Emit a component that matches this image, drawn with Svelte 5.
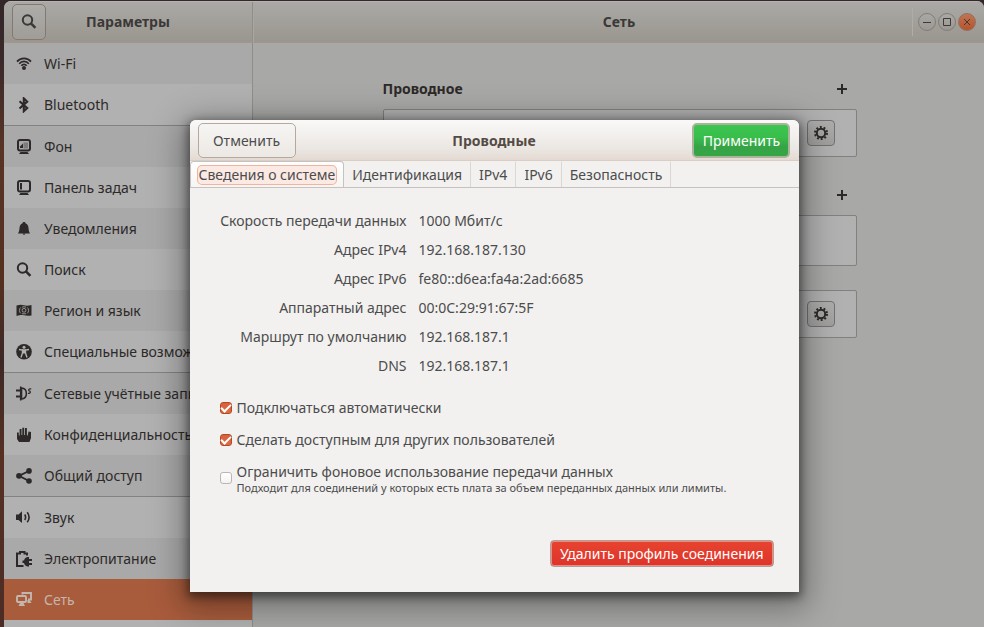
<script>
  const groups = [
    [
      { icon: 'wifi', label: 'Wi-Fi' },
      { icon: 'bluetooth', label: 'Bluetooth' }
    ],
    [
      { icon: 'background', label: 'Фон' },
      { icon: 'dock', label: 'Панель задач' },
      { icon: 'bell', label: 'Уведомления' },
      { icon: 'search', label: 'Поиск' },
      { icon: 'region', label: 'Регион и язык' },
      { icon: 'access', label: 'Специальные возможности' }
    ],
    [
      { icon: 'accounts', label: 'Сетевые учётные записи' },
      { icon: 'hand', label: 'Конфиденциальность' },
      { icon: 'share', label: 'Общий доступ' }
    ],
    [
      { icon: 'sound', label: 'Звук' },
      { icon: 'power', label: 'Электропитание' },
      { icon: 'network', label: 'Сеть', active: true }
    ]
  ];

  const tabs = ['Сведения о системе', 'Идентификация', 'IPv4', 'IPv6', 'Безопасность'];
  let current = $state(0);

  const details = [
    ['Скорость передачи данных', '1000 Мбит/с'],
    ['Адрес IPv4', '192.168.187.130'],
    ['Адрес IPv6', 'fe80::d6ea:fa4a:2ad:6685'],
    ['Аппаратный адрес', '00:0C:29:91:67:5F'],
    ['Маршрут по умолчанию', '192.168.187.1'],
    ['DNS', '192.168.187.1']
  ];

  let auto = $state(true);
  let shared = $state(true);
  let metered = $state(false);
</script>

{#snippet icon(name)}
  <svg class="icon" viewBox="0 0 16 16" aria-hidden="true">
    {#if name === 'wifi'}
      <g fill="none" stroke="currentColor" stroke-width="1.7">
        <path d="M1 5.6C4.6 1.2 11.400 1.200 15 5.600" />
        <path d="M3.200 7.700C5.700 4.700 10.300 4.700 12.800 7.700" />
        <path d="M5.300 9.700C6.800 8 9.200 8 10.700 9.700" />
      </g>
      <circle cx="8" cy="12" r="2" fill="currentColor" />
    {:else if name === 'bluetooth'}
      <path d="M3.500 4.200L11.200 11L7.800 14.200V1.300L11.200 4.600L3.500 11.500" fill="none" stroke="currentColor" stroke-width="2.100" />
    {:else if name === 'background'}
      <rect x="2" y="1" width="12" height="10.500" rx="2" fill="none" stroke="currentColor" stroke-width="2" />
      <path d="M4 9V7.500L7 4.500V9Z" fill="currentColor" />
      <path d="M7.500 3.500H12V9.500H7.500Z" fill="currentColor" opacity=".35" />
      <path d="M4.500 13H11.500L13 15H3Z" fill="currentColor" />
    {:else if name === 'dock'}
      <rect x="2" y="1" width="12" height="10.500" rx="2" fill="none" stroke="currentColor" stroke-width="2" />
      <path d="M4 3H6V9.500H4Z" fill="currentColor" />
      <path d="M4.500 13H11.500L13 15H3Z" fill="currentColor" />
    {:else if name === 'bell'}
      <path d="M8 1C9 1 9.500 1.600 9.500 2.300C12 3.200 12.500 5.500 12.600 8C12.700 10 13.300 11 14 12.500H2C2.700 11 3.300 10 3.400 8C3.500 5.500 4 3.200 6.500 2.300C6.500 1.600 7 1 8 1ZM6.500 12.700H9.500L8 14Z" fill="currentColor" />
    {:else if name === 'search'}
      <circle cx="6.500" cy="6" r="4.700" fill="none" stroke="currentColor" stroke-width="2" />
      <path d="M9.700 9.200L14.400 13.900" stroke="currentColor" stroke-width="2.500" />
    {:else if name === 'region'}
      <path d="M.5 2.500C4 1.500 6 1.700 8 2.300S12 3 15.500 2V12.500C12 13 10 12.800 8 12.300S4 12 .5 13Z" fill="currentColor" />
      <g fill="none" stroke="var(--row)" stroke-width=".8">
        <circle cx="8" cy="7.300" r="1.900" />
        <path d="M4.700 4.500C3 6 3 9 4.700 10.300M11.300 4.500C13 6 13 9 11.300 10.300M6 4.200C7.300 3.600 8.700 3.600 10 4.200M6 10.600C7.300 11 8.700 11 10 10.600" />
      </g>
    {:else if name === 'access'}
      <circle cx="8" cy="7.800" r="7.800" fill="currentColor" />
      <circle cx="8" cy="3.200" r="1.500" fill="var(--row)" />
      <path d="M3 5.500L6.500 6V9L5 13.500M13 5.500L9.500 6V9L11 13.500" fill="none" stroke="var(--row)" stroke-width="1.400" />
      <path d="M6 5.300H10V9.500H6Z" fill="var(--row)" />
    {:else if name === 'accounts'}
      <path d="M0 4.500H4M0 10.500H4" stroke="currentColor" stroke-width="2" />
      <path d="M4.700 .5V14.500" stroke="currentColor" stroke-width="1.600" />
      <path d="M5.500 2C12 2.500 12 12.500 5.500 13Z" fill="none" stroke="currentColor" stroke-width="1.600" />
      <path d="M15.300 3C12.500 2.300 12 4.500 13.500 5S14.500 7.800 12 7.300" fill="none" stroke="currentColor" stroke-width="1.200" />
    {:else if name === 'hand'}
      <path d="M1 5.500H2.800V8.500H3.600V2H5.500V8H6.300V.8H8.200V8H9V1H10.900V8.500H11.700L12.500 4.500L15 5V11L13.500 15H3L1 12Z" fill="currentColor" />
    {:else if name === 'share'}
      <path d="M13 3L3 7.800L13 13" fill="none" stroke="currentColor" stroke-width="1.900" />
      <g fill="currentColor"><circle cx="13" cy="2.900" r="2.800" /><circle cx="3" cy="7.800" r="2.900" /><circle cx="13" cy="13" r="2.800" /></g>
    {:else if name === 'sound'}
      <path d="M0 4.500H2.500L6 1.200V13L2.500 10H0Z" fill="currentColor" />
      <path d="M8.700 4.500Q10.500 7.200 8.700 10M11.200 2.200Q15 7.200 11.200 12.200" fill="none" stroke="currentColor" stroke-width="1.600" />
    {:else if name === 'power'}
      <path d="M11 4.500V2.500H8.500V0.900H4V2.500H1V15H7.500" fill="none" stroke="currentColor" stroke-width="2" />
      <path d="M6.500 9.500H8C8.500 7.500 10 6 12 6H13V8H16V10H13V12H16V14H13V15.500H12C10 15.500 8.500 14 8 12H6.500Z" fill="currentColor" />
    {:else if name === 'network'}
      <path d="M6.500 2.500V1H15V7.500H12" fill="none" stroke="currentColor" stroke-width="1.900" />
      <rect x="1" y="4" width="9" height="6" rx="1" fill="none" stroke="currentColor" stroke-width="1.900" />
      <path d="M4 11H7.500L9 14H2.500ZM11.500 8H13.500L15.500 11H11.500Z" fill="currentColor" />
    {:else if name === 'plus'}
      <path d="M8 3V13M3 8H13" stroke="currentColor" stroke-width="2" />
    {:else if name === 'gear'}
      <circle cx="8" cy="8" r="4.200" fill="none" stroke="currentColor" stroke-width="2" />
      <circle cx="8" cy="8" r="6" fill="none" stroke="currentColor" stroke-width="2" stroke-dasharray="1.900 1.870" />
    {/if}
  </svg>
{/snippet}

<div class="desktop">
  <div class="window">
    <header class="titlebar">
      <div class="title-side">
        <button class="search" aria-label="Поиск">{@render icon('search')}</button>
        <h1>Параметры</h1>
      </div>
      <div class="title-main">
        <h2>Сеть</h2>
        <div class="controls">
          <button aria-label="Свернуть"><svg viewBox="0 0 18 18"><path d="M5 9.500H13" /></svg></button>
          <button aria-label="Развернуть"><svg viewBox="0 0 18 18"><path d="M5.500 5.500H12.500V12.500H5.500Z" /></svg></button>
          <button class="close" aria-label="Закрыть"><svg viewBox="0 0 18 18"><path d="M6 6L12 12M12 6L6 12" /></svg></button>
        </div>
      </div>
    </header>

    <div class="body">
      <nav>
        {#each groups as group}
          <ul>
            {#each group as item}
              <li>
                <a href="#{item.icon}" class:active={item.active}>
                  {@render icon(item.icon)}
                  <span>{item.label}</span>
                </a>
              </li>
            {/each}
          </ul>
        {/each}
      </nav>

      <main>
        <div class="column">
          <section>
            <div class="section-head">
              <h3>Проводное</h3>
              <button class="add" aria-label="Добавить">{@render icon('plus')}</button>
            </div>
            <div class="card"><button class="gear" aria-label="Настроить">{@render icon('gear')}</button></div>
          </section>
          <section>
            <div class="section-head">
              <h3>VPN</h3>
              <button class="add" aria-label="Добавить VPN">{@render icon('plus')}</button>
            </div>
            <div class="card empty"></div>
          </section>
          <section class="proxy">
            <div class="card"><button class="gear" aria-label="Настроить прокси">{@render icon('gear')}</button></div>
          </section>
        </div>
      </main>
    </div>

    <div class="overlay">
      <div class="dialog" role="dialog" aria-labelledby="dialog-title">
        <div class="dialog-head">
          <button class="cancel">Отменить</button>
          <h2 id="dialog-title">Проводные</h2>
          <button class="apply">Применить</button>
        </div>
        <div class="tabs" role="tablist">
          {#each tabs as tab, i}
            <button role="tab" aria-selected={current === i} class:current={current === i} onclick={() => (current = i)}>
              <span>{tab}</span>
            </button>
          {/each}
        </div>
        <div class="panel">
          <dl>
            {#each details as [name, value]}
              <dt>{name}</dt>
              <dd>{value}</dd>
            {/each}
          </dl>
          <div class="checks">
            <label><input type="checkbox" bind:checked={auto} /><span>Подключаться автоматически</span></label>
            <label><input type="checkbox" bind:checked={shared} /><span>Сделать доступным для других пользователей</span></label>
            <label>
              <input type="checkbox" bind:checked={metered} />
              <span>
                Ограничить фоновое использование передачи данных
                <small>Подходит для соединений у которых есть плата за объем переданных данных или лимиты.</small>
              </span>
            </label>
          </div>
          <button class="delete">Удалить профиль соединения</button>
        </div>
      </div>
    </div>
  </div>
</div>

<style>
  :global(body) {
    margin: 0;
  }
  .desktop {
    box-sizing: border-box;
    height: 100vh;
    overflow: hidden;
    padding: 1px 0 0 4px;
    background: linear-gradient(#33272a 0, #3a292a 60px, #593425 150px, #55301f 280px, #3d2826 360px, #573022 460px, #4b2c26 100%);
    font: 14px/20px "Noto Sans", sans-serif;
    color: #2d2928;
  }
  .desktop * {
    box-sizing: border-box;
  }
  h1, h2, h3 {
    margin: 0;
    font: inherit;
    font-weight: 700;
  }
  button {
    font: inherit;
    color: inherit;
    margin: 0;
    padding: 0;
  }
  .icon {
    display: block;
    flex: none;
    width: 16px;
    height: 16px;
  }
  .window {
    position: relative;
    display: flex;
    flex-direction: column;
    height: 100%;
    overflow: hidden;
    border-radius: 7px 7px 0 0;
    background: #a8a8a6;
  }
  .titlebar {
    display: flex;
    flex: none;
    height: 42px;
    border-top: 1px solid #b5b4b2;
    border-bottom: 1px solid #a3948c;
    background: linear-gradient(#aaa9a6, #9a968f);
    color: #3b3838;
  }
  .title-side {
    display: flex;
    align-items: center;
    width: 249px;
    padding-left: 8px;
    border-right: 1px solid #918d88;
  }
  .title-side h1 {
    flex: 1;
    padding-right: 42px;
    text-align: center;
  }
  .search {
    display: grid;
    place-items: center;
    width: 34px;
    height: 36px;
    border: 1px solid #827a71;
    border-radius: 5px;
    background: linear-gradient(#adaca9, #a09d98);
  }
  .title-main {
    display: flex;
    flex: 1;
    align-items: center;
    padding-right: 8px;
    border-left: 1px solid #aaa7a3;
  }
  .title-main h2 {
    flex: 1;
    padding-left: 72px;
    text-align: center;
  }
  .controls {
    display: flex;
    gap: 2px;
    padding: 5px 0 5px 5px;
    border-left: 1px solid #b0ada9;
  }
  .controls button {
    width: 18px;
    height: 18px;
    border: 1px solid #837c76;
    border-radius: 50%;
    background: linear-gradient(#aaa8a5, #9b9893);
  }
  .controls svg {
    display: block;
    width: 18px;
    height: 18px;
    margin: -1px;
    fill: none;
    stroke: #3d3a38;
  }
  .controls .close {
    border-color: #93705f;
    background: linear-gradient(#c07454, #b6532c);
  }
  .body {
    display: flex;
    flex: 1;
    min-height: 0;
  }
  nav {
    width: 249px;
    flex: none;
    overflow: hidden;
    border-right: 1px solid #8f8e8c;
    background: #b1b1b1;
  }
  ul {
    margin: 0;
    padding: 0;
    list-style: none;
  }
  ul + ul {
    border-top: 1px solid #838281;
  }
  nav a {
    --row: #b1b1b1;
    display: flex;
    align-items: center;
    gap: 12px;
    height: 41px;
    padding: 0 12px;
    background: var(--row);
    color: inherit;
    text-decoration: none;
    white-space: nowrap;
  }
  ul:not(:last-child) li:nth-child(odd) a,
  ul:last-child li:nth-child(even) a {
    --row: #a9a9a9;
  }
  nav a.active {
    --row: #a95c3c;
    color: #c4b6ae;
  }
  main {
    flex: 1;
    display: flex;
    justify-content: center;
    padding: 34px 16px 0 18px;
  }
  .column {
    width: 100%;
    max-width: 474px;
  }
  .section-head {
    display: flex;
    align-items: center;
    justify-content: space-between;
    height: 24px;
    margin-bottom: 8px;
  }
  .add {
    display: grid;
    place-items: center;
    width: 30px;
    height: 24px;
    border: 0;
    background: none;
  }
  .card {
    display: flex;
    align-items: center;
    justify-content: flex-end;
    height: 48px;
    padding-right: 21px;
    border: 1px solid #82817f;
    border-radius: 2px;
    background: #b1b1b1;
  }
  .card.empty {
    height: 51px;
  }
  section {
    margin-bottom: 26px;
  }
  section + .proxy {
    margin-top: 24px;
  }
  section:nth-child(2) {
    margin-bottom: 0;
  }
  .gear {
    display: grid;
    place-items: center;
    width: 28px;
    height: 26px;
    border: 1px solid #737270;
    border-radius: 4px;
    background: linear-gradient(#adadac, #a09f9d);
  }
  .overlay {
    position: absolute;
    inset: 0;
    display: flex;
    align-items: flex-start;
    justify-content: center;
    padding-top: 119px;
  }
  .dialog {
    width: 609px;
    max-width: 100%;
    overflow: hidden;
    border-radius: 6px 6px 0 0;
    background: #f2f1f0;
    box-shadow: 0 3px 10px 2px rgba(0, 0, 0, .45), 0 8px 32px 8px rgba(0, 0, 0, .34);
    color: #4c4c4c;
  }
  .dialog-head {
    display: flex;
    align-items: center;
    justify-content: space-between;
    height: 41px;
    padding: 1px 8px 0;
    border-bottom: 1px solid #d9cec5;
    background: linear-gradient(#faf9f8, #ebe7e3 70%, #e5dad2);
  }
  .dialog-head h2 {
    color: #544b44;
  }
  .dialog-head button {
    width: 98px;
    height: 35px;
    border: 1px solid #b5a99e;
    border-radius: 5px;
    background: linear-gradient(#f6f5f3, #ece8e4);
  }
  .dialog-head .apply {
    border: 2px solid #a9b49b;
    background: linear-gradient(#3dc550 0, #39bd4b 40%, #36a446 70%, #35a546);
    color: #fff;
  }
  .tabs {
    display: flex;
    height: 27px;
    border-bottom: 1px solid #c5c2bf;
  }
  .tabs button {
    padding: 0 8px;
    border: 0;
    border-top: 1px solid transparent;
    border-right: 1px solid #dcd7d3;
    background: none;
    white-space: nowrap;
  }
  .tabs span {
    display: block;
    line-height: 18px;
  }
  .tabs .current {
    padding: 0 7px;
    border: 1px solid #c5c2bf;
    border-bottom: 0;
    border-radius: 4px 4px 0 0;
    background: linear-gradient(#fff, #f6f5f4);
  }
  .tabs .current span {
    padding: 0 1px;
    border-radius: 4px;
    background: #fbe9e3;
    box-shadow: 0 0 0 1px #f0b39d;
  }
  .panel {
    display: flex;
    flex-direction: column;
    padding: 18px 25px 25px 24px;
  }
  dl {
    display: grid;
    grid-template-columns: 193px auto;
    column-gap: 12px;
    margin: 0;
    line-height: 29px;
    white-space: nowrap;
  }
  dt {
    text-align: right;
  }
  dd {
    margin: 0;
  }
  .checks {
    display: flex;
    flex-direction: column;
    gap: 12px;
    padding: 18px 0 0 6px;
  }
  label {
    display: flex;
    align-items: center;
    gap: 5px;
  }
  input {
    appearance: none;
    flex: none;
    display: grid;
    place-items: center;
    width: 12px;
    height: 12px;
    margin: 0;
    border: 1px solid #b9b6b3;
    border-radius: 3px;
    background: linear-gradient(#fff, #f4f3f2);
  }
  input:checked {
    border-color: #b04a26;
    background: linear-gradient(#d9603a, #e06c42);
  }
  input:checked::before {
    content: "";
    width: 8px;
    height: 4px;
    margin-bottom: 3px;
    border: solid #fff;
    border-width: 0 0 2px 2px;
    transform: rotate(-45deg);
  }
  small {
    display: block;
    font-size: 11px;
    line-height: 12px;
  }
  .delete {
    align-self: flex-end;
    height: 27px;
    margin-top: 46px;
    padding: 0 9px;
    border: 1px solid #a8a19d;
    border-radius: 4px;
    background: linear-gradient(#e8432f, #dd342b);
    box-shadow: inset 0 0 0 1px #f08a7c;
    color: #fff;
  }
</style>
